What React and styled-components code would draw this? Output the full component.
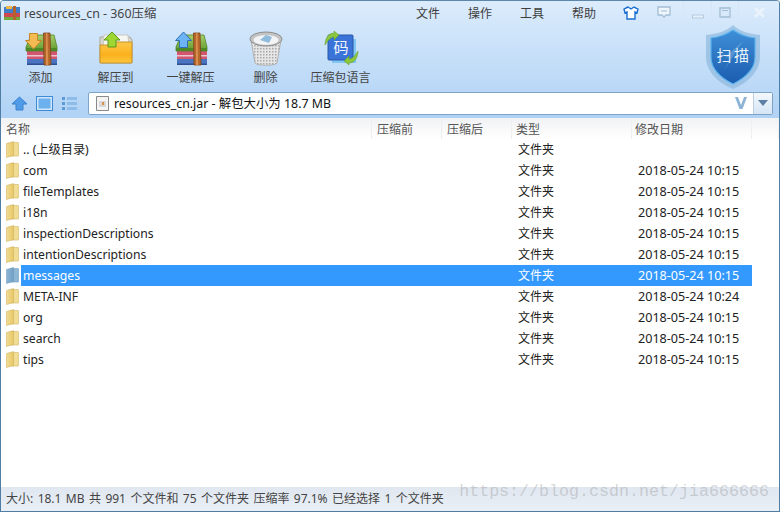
import React from "react";
import styled, { createGlobalStyle } from "styled-components";

const GlobalStyle = createGlobalStyle`
  html, body { margin: 0; padding: 0; background: #fff; }
  * { box-sizing: border-box; }
`;

const FONT = `"Noto Sans", "Noto Sans CJK SC", sans-serif`;

const Window = styled.div`
  position: relative;
  display: flex;
  flex-direction: column;
  width: 780px;
  height: 512px;
  overflow: hidden;
  font-family: ${FONT};
  font-size: 12px;
  color: #222;
  background: #fff;
  border: 1px solid #4f7da3;
  border-top-color: #5b87ab;
  border-radius: 4px 4px 0 0;
`;

const Chrome = styled.div`
  height: 117px;
  flex: none;
  display: flex;
  flex-direction: column;
  background: linear-gradient(180deg, #dcecfc 0%, #c9e1f9 40%, #b0d2f5 100%);
`;

const TitleBar = styled.div`
  height: 23px;
  flex: none;
  display: flex;
  align-items: center;
  padding-left: 3px;
`;

const TitleText = styled.span`
  margin-left: 4px;
  font-size: 12.4px;
  color: #444;
`;

const Menu = styled.div`
  display: flex;
  margin-left: auto;
  align-items: center;
`;

const MenuItem = styled.span`
  width: 52px;
  font-size: 12px;
  color: #3d3d3d;
  &:nth-child(4) { width: 42px; }
`;

const TitleIcons = styled.div`
  display: flex;
  align-items: center;
`;

const TitleIcon = styled.span`
  display: flex;
  align-items: center;
  justify-content: center;
  width: ${(p) => p.$w}px;
  height: 23px;
  margin-left: ${(p) => p.$gap ?? 0}px;
  border-left: ${(p) => (p.$sep ? "1px solid #d5e6f7" : "none")};
`;

const Toolbar = styled.div`
  height: 66px;
  flex: none;
  display: flex;
  padding-left: 2px;
`;

const ToolButton = styled.div`
  width: 75px;
  display: flex;
  flex-direction: column;
  align-items: center;
  padding-top: 6px;
  font-size: 12px;
  color: #444;
  white-space: nowrap;
  svg { display: block; margin-bottom: 2px; }
`;

const Shield = styled.div`
  position: absolute;
  top: 24px;
  right: 19px;
  width: 54px;
  height: 64px;
`;

const ShieldLabel = styled.span`
  position: absolute;
  inset: 20px 0 auto 0;
  text-align: center;
  font-size: 15px;
  line-height: 20px;
  letter-spacing: 2.500px;
  text-indent: 2px;
  color: #e8f2fb;
`;

const PathRow = styled.div`
  height: 24px;
  margin-top: 1px;
  flex: none;
  display: flex;
  align-items: center;
  padding: 0 6px 0 10px;
`;

const NavIcon = styled.span`
  display: flex;
  width: 25px;
`;

const PathBox = styled.div`
  flex: 1;
  height: 23px;
  margin-left: 2px;
  display: flex;
  align-items: center;
  background: #fff;
  border: 1px solid #7ea3c4;
  border-radius: 2px;
  padding-left: 7px;
`;

const PathText = styled.span`
  margin-left: 5px;
  font-size: 12.4px;
  color: #111;
`;

const Dropdown = styled.span`
  width: 19px;
  align-self: stretch;
  margin-left: 5px;
  display: flex;
  align-items: center;
  justify-content: center;
  border-left: 1px solid #bcd0e2;
  background: linear-gradient(180deg, #f3f8fd, #d5e5f5);
`;

const VBadge = styled.span`
  margin-left: auto;
  display: flex;
`;

const Header = styled.div`
  height: 21px;
  flex: none;
  display: grid;
  grid-template-columns: 371px 70px 70px 120px 120px 1fr;
  background: linear-gradient(180deg, #f1f2f4 0%, #fff 100%);
`;

const HeaderCell = styled.div`
  display: flex;
  align-items: center;
  padding-left: ${(p) => p.$pad ?? 5}px;
  font-size: 12px;
  color: #555;
  border-right: 1px solid #eeeff1;
`;

const List = styled.div`
  flex: 1;
  background: #fff;
`;

const Row = styled.div`
  display: flex;
  height: 21px;
`;

const IconSlot = styled.div`
  width: 20px;
  flex: none;
  display: flex;
  align-items: center;
  padding-left: 5px;
`;

const RowBody = styled.div`
  width: 731px;
  display: grid;
  grid-template-columns: 351px 70px 70px 120px 120px;
  line-height: 21px;
  white-space: nowrap;
  color: ${(p) => (p.$selected ? "#fff" : "#222")};
  background: ${(p) => (p.$selected ? "#3399ff" : "transparent")};
`;

const Name = styled.div`
  padding-left: 2px;
  font-size: 12.2px;
`;

const Cell = styled.div`
  font-size: 12px;
  padding-left: ${(p) => p.$pad ?? 0}px;
`;

const DateCell = styled(Cell)`
  font-size: 12.6px;
`;

const StatusBar = styled.div`
  height: 24px;
  flex: none;
  display: flex;
  align-items: center;
  padding: 0 0 3px 5px;
  font-size: 12px;
  word-spacing: 1.300px;
  color: #444;
  background: linear-gradient(180deg, #e0e7f0, #e9eff6);
`;

const Watermark = styled.div`
  position: absolute;
  right: 10px;
  bottom: 9px;
  font-family: "Liberation Mono", monospace;
  font-size: 16.670px;
  line-height: 20px;
  color: rgba(150, 150, 150, 0.38);
`;

function ArchiveIcon({ arrow }) {
  return (
    <svg width="36" height="36" viewBox="0 0 36 36">
      <defs>
        <linearGradient id="bookGreen" x1="0" y1="0" x2="0" y2="1">
          <stop offset="0" stopColor="#a8cf6a" />
          <stop offset="1" stopColor="#5f9a2e" />
        </linearGradient>
      </defs>
      <path d="M4 21h30v8H4z" fill="#d2566f" />
      <path d="M4 25h30v1.500H4z" fill="#ecc5cf" />
      <path d="M4 29h30v6H4z" fill="#4a74c0" />
      <path d="M4 33.500h30V35H4z" fill="#2f4f92" />
      <path d="M8 5h23l3 12v4H3v-4z" fill="url(#bookGreen)" stroke="#4f8426" strokeWidth="0.800" />
      <path d="M3 18h31v3H3z" fill="#4d8a25" />
      <path d="M20.500 3h6.500l1 32h-7z" fill="#b5682c" stroke="#7c421b" strokeWidth="0.800" />
      <path d="M23 3h1.500l.7 32H23z" fill="#d98e4e" />
      {arrow === "down" ? (
        <path d="M6.500 3.500h8v7h4L10.500 19 2.500 10.500h4z" fill="#f4bb52" stroke="#c4872a" />
      ) : (
        <path d="M10.500 2L18.500 10.500h-4v7h-8v-7h-4z" fill="#6cb4f4" stroke="#2f6fb5" />
      )}
    </svg>
  );
}

function FolderOpenIcon() {
  return (
    <svg width="36" height="36" viewBox="0 0 36 36">
      <defs>
        <linearGradient id="folderFace" x1="0" y1="0" x2="0" y2="1">
          <stop offset="0" stopColor="#fcc94a" />
          <stop offset="0.6" stopColor="#fbb01c" />
          <stop offset="1" stopColor="#fdc63f" />
        </linearGradient>
      </defs>
      <path d="M2 7h30l2 3v23H2z" fill="#d7d7d0" stroke="#aaa59a" />
      <path d="M6 5h24l1 13H5z" fill="#f6f6f2" stroke="#c9c9c2" />
      <path d="M2 15h12l3-3h17v20a1 1 0 0 1-1 1H3a1 1 0 0 1-1-1z" fill="url(#folderFace)" stroke="#c8922a" />
      <path d="M14 2l8 8h-4v7h-8v-7H6z" fill="#9ed632" stroke="#5c9a1e" />
    </svg>
  );
}

function TrashIcon() {
  return (
    <svg width="36" height="36" viewBox="0 0 36 36">
      <defs>
        <pattern id="mesh" width="3" height="3" patternUnits="userSpaceOnUse">
          <rect width="3" height="3" fill="#e6e6e6" />
          <rect width="1.500" height="1.500" fill="#a8a8a8" />
        </pattern>
      </defs>
      <path d="M3 10l4 23c2 3 20 3 22 0l4-23z" fill="url(#mesh)" stroke="#b0b0b0" />
      <ellipse cx="18" cy="9" rx="16" ry="7" fill="#c4c4c4" stroke="#8c8c8c" />
      <ellipse cx="18" cy="10" rx="12.500" ry="4.800" fill="#f2f4f6" />
      <path d="M12 10l6-5 6 2-3 6z" fill="#8fbbdc" />
    </svg>
  );
}

function LangIcon() {
  return (
    <svg width="36" height="36" viewBox="0 0 36 36">
      <rect x="9" y="9" width="24" height="24" fill="#7fc6f2" />
      <rect x="5" y="5" width="25" height="25" rx="1" fill="#3b74d9" stroke="#2856a8" />
      <text x="18" y="23" textAnchor="middle" fontSize="15" fill="#f2f6fc" fontFamily="Noto Sans CJK SC">码</text>
      <path d="M2 15c0-6 3-12 9-12V1l5 4-5 5V7c-3 0-6 3-9 8z" fill="#8cc63f" stroke="#5d9a26" strokeWidth="0.5" />
      <path d="M35 21c0 6-3 12-9 12v2l-5-4 5-5v3c3 0 6-3 9-8z" fill="#8cc63f" stroke="#5d9a26" strokeWidth="0.5" />
    </svg>
  );
}

function AppIcon() {
  return (
    <svg width="16" height="16" viewBox="0 0 16 16">
      <rect x="0" y="2" width="16" height="6" fill="#3f7fc9" />
      <rect x="0" y="8" width="16" height="4" fill="#d0484f" />
      <rect x="0" y="12" width="16" height="3" fill="#6dab3c" />
      <rect x="9" y="1" width="3" height="14" fill="#b2622a" />
      <rect x="2" y="1" width="6" height="3" fill="#f0b84a" />
    </svg>
  );
}

function FolderIcon({ selected }) {
  const back = selected ? "#8db5d4" : "#f0dc94";
  const front = selected ? "#6fa0c6" : "#e9c766";
  const edge = selected ? "#6a97ba" : "#c9ad55";
  const id = selected ? "leafBlue" : "leafYellow";
  return (
    <svg width="13" height="17" viewBox="0 0 13 17">
      <defs>
        <linearGradient id={id} x1="0" y1="0" x2="1" y2="0">
          <stop offset="0" stopColor={back} />
          <stop offset="1" stopColor={front} />
        </linearGradient>
      </defs>
      <path d="M5 1.500h7a.8.8 0 0 1 .7.8v12a.8.8 0 0 1-.7.800H5z" fill={back} stroke={edge} strokeWidth="0.500" />
      <path d="M.5 2.500L7.500 .5V14.500L.5 16.500z" fill={`url(#${id})`} stroke={edge} strokeWidth="0.500" />
    </svg>
  );
}

const tools = [
  { label: "添加", icon: <ArchiveIcon arrow="down" /> },
  { label: "解压到", icon: <FolderOpenIcon /> },
  { label: "一键解压", icon: <ArchiveIcon arrow="up" /> },
  { label: "删除", icon: <TrashIcon /> },
  { label: "压缩包语言", icon: <LangIcon /> },
];

const files = [
  [".. (上级目录)", ""],
  ["com", "2018-05-24 10:15"],
  ["fileTemplates", "2018-05-24 10:15"],
  ["i18n", "2018-05-24 10:15"],
  ["inspectionDescriptions", "2018-05-24 10:15"],
  ["intentionDescriptions", "2018-05-24 10:15"],
  ["messages", "2018-05-24 10:15", true],
  ["META-INF", "2018-05-24 10:24"],
  ["org", "2018-05-24 10:15"],
  ["search", "2018-05-24 10:15"],
  ["tips", "2018-05-24 10:15"],
];

export default function App() {
  return (
    <>
      <GlobalStyle />
      <Window>
        <Chrome>
          <TitleBar>
            <AppIcon />
            <TitleText>resources_cn - 360压缩</TitleText>
            <Menu>
              {["文件", "操作", "工具", "帮助"].map((m) => (
                <MenuItem key={m}>{m}</MenuItem>
              ))}
              <TitleIcons>
                <TitleIcon $w={33}>
                  <svg width="16" height="14" viewBox="0 0 16 14">
                    <path d="M5 1L1 3l1 4 2-1v7h8V6l2 1 1-4-4-2-3 2z" fill="#fff" stroke="#1a6fd0" strokeWidth="1.400" />
                  </svg>
                </TitleIcon>
                <TitleIcon $w={33}>
                  <svg width="14" height="13" viewBox="0 0 14 13">
                    <path d="M1 1h12v8H9l-2 2-2-2H1z" fill="#eef5fc" stroke="#a3bdd3" strokeWidth="1.300" />
                    <path d="M4 5h6" stroke="#a3bdd3" />
                  </svg>
                </TitleIcon>
                <TitleIcon $w={28} $gap={3} $sep>
                  <svg width="12" height="12" viewBox="0 0 12 12">
                    <rect x="0.500" y="8" width="11" height="3" fill="#e6f0fa" stroke="#a3bdd3" strokeWidth="0.700" />
                  </svg>
                </TitleIcon>
                <TitleIcon $w={27} $sep>
                  <svg width="12" height="11" viewBox="0 0 12 11">
                    <path d="M1 1h10v9H1z" fill="none" stroke="#a3bdd3" strokeWidth="1.300" />
                    <path d="M3 3h6v1H3z" fill="#a3bdd3" />
                  </svg>
                </TitleIcon>
                <TitleIcon $w={41} $sep>
                  <svg width="13" height="13" viewBox="0 0 13 13">
                    <path d="M2 2l9 9M11 2l-9 9" stroke="#eaf3fb" strokeWidth="3" />
                  </svg>
                </TitleIcon>
              </TitleIcons>
            </Menu>
          </TitleBar>
          <Toolbar>
            {tools.map((t) => (
              <ToolButton key={t.label}>
                {t.icon}
                {t.label}
              </ToolButton>
            ))}
          </Toolbar>
          <PathRow>
            <NavIcon>
              <svg width="17" height="15" viewBox="0 0 17 15">
                <path d="M8.500 1L16 8h-4v6H5V8H1z" fill="#4f9be8" stroke="#3b82cf" />
              </svg>
            </NavIcon>
            <NavIcon>
              <svg width="17" height="15" viewBox="0 0 17 15">
                <rect x="0.500" y="0.500" width="16" height="14" fill="#cfe6fb" stroke="#3f8ad6" />
                <rect x="2.500" y="2.500" width="12" height="10" fill="#6db0ee" />
              </svg>
            </NavIcon>
            <NavIcon>
              <svg width="17" height="15" viewBox="0 0 17 15">
                <path d="M1 1h3v3H1zM1 6h3v3H1zM1 11h3v3H1z" fill="#5b9bd8" />
                <path d="M6 1h10v3H6zM6 6h10v3H6zM6 11h10v3H6z" fill="#8dbce8" />
              </svg>
            </NavIcon>
            <PathBox>
              <svg width="13" height="15" viewBox="0 0 13 15">
                <path d="M0.500 0.500h12v14h-12z" fill="#f4f4f4" stroke="#8a8a8a" />
                <rect x="3" y="5" width="7" height="6" fill="#d8d8d8" />
                <rect x="6" y="6" width="2" height="3" fill="#d9904a" />
              </svg>
              <PathText>resources_cn.jar - 解包大小为 18.7 MB</PathText>
              <VBadge>
                <svg width="14" height="12" viewBox="0 0 14 12">
                  <path d="M1 0h3l3 8 3-8h3L8.500 12h-3z" fill="#8eb4d6" />
                </svg>
              </VBadge>
              <Dropdown>
                <svg width="10" height="6" viewBox="0 0 10 6">
                  <path d="M0 0h10L5 6z" fill="#5d7fa3" />
                </svg>
              </Dropdown>
            </PathBox>
          </PathRow>
        </Chrome>
        <Shield>
          <svg width="54" height="64" viewBox="0 0 54 64">
            <defs>
              <linearGradient id="shieldFill" x1="0" y1="0" x2="0" y2="1">
                <stop offset="0" stopColor="#3f8fd8" />
                <stop offset="1" stopColor="#1a5cae" />
              </linearGradient>
            </defs>
            <path d="M27 0c6 6 16 9 27 10v22c0 14-12 26-27 32C12 58 0 46 0 32V10C11 9 21 6 27 0z" fill="#8fb9de" opacity="0.7" />
            <path d="M27 5c6 4 13 7 22 8v19c0 12-10 21-22 27C15 53 5 44 5 32V13c9-1 16-4 22-8z" fill="url(#shieldFill)" stroke="#5ab2ee" strokeWidth="1.200" />
            <path d="M37 16L17 47l8-14-6-1 18-16z" fill="#6ea6da" opacity="0.6" />
          </svg>
          <ShieldLabel>扫描</ShieldLabel>
        </Shield>
        <Header>
          <HeaderCell>名称</HeaderCell>
          <HeaderCell>压缩前</HeaderCell>
          <HeaderCell>压缩后</HeaderCell>
          <HeaderCell $pad={4}>类型</HeaderCell>
          <HeaderCell $pad={3}>修改日期</HeaderCell>
          <HeaderCell />
        </Header>
        <List>
          {files.map(([name, date, selected]) => (
            <Row key={name}>
              <IconSlot>
                <FolderIcon selected={selected} />
              </IconSlot>
              <RowBody $selected={selected}>
                <Name>{name}</Name>
                <Cell />
                <Cell />
                <Cell $pad={6}>文件夹</Cell>
                <DateCell $pad={6}>{date}</DateCell>
              </RowBody>
            </Row>
          ))}
        </List>
        <StatusBar>大小: 18.1 MB 共 991 个文件和 75 个文件夹 压缩率 97.1% 已经选择 1 个文件夹</StatusBar>
        <Watermark>https://blog.csdn.net/jia666666</Watermark>
      </Window>
    </>
  );
}
